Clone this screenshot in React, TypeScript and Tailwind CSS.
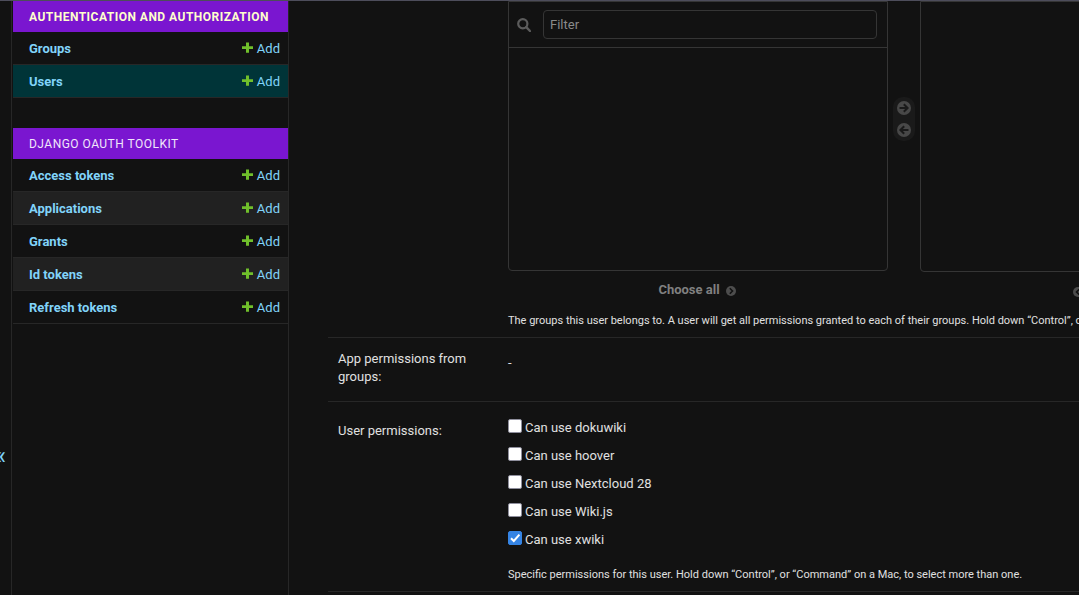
import { useState } from "react";

const LINK = "text-[#81d4fa] no-underline hover:underline";

function PlusIcon() {
  return (
    <svg viewBox="0 0 12 12" className="mb-0.5 h-3 w-3" aria-hidden="true">
      <path d="M4 0.5h3v3.7h4v2.8h-4v3.7h-3V7h-4V4.2h4z" fill="#70bf2b" />
    </svg>
  );
}

function ArrowIcon({ left = false }: { left?: boolean }) {
  return (
    <svg viewBox="0 0 14 14" className="h-3.5 w-3.5" aria-hidden="true">
      <circle cx="7" cy="7" r="7" fill="#484848" />
      <path
        d={left ? "M11.5 7H3.5M7.2 3.2L3.4 7l3.8 3.8" : "M2.5 7h8M6.8 3.2L10.6 7l-3.8 3.8"}
        fill="none"
        stroke="#1a1a1a"
        strokeWidth="2"
      />
    </svg>
  );
}

function ChevronIcon({ left = false }: { left?: boolean }) {
  return (
    <svg viewBox="0 0 10 10" className="mt-0.5 h-2.5 w-2.5" aria-hidden="true">
      <circle cx="5" cy="5" r="5" fill="#4d4d4d" />
      <path
        d={left ? "M6.2 2.3L3.5 5l2.7 2.7" : "M3.8 2.3L6.5 5 3.8 7.7"}
        fill="none"
        stroke="#121212"
        strokeWidth="1.6"
      />
    </svg>
  );
}

function SearchIcon() {
  return (
    <svg viewBox="0 0 14 14" className="h-3.5 w-3.5" aria-hidden="true">
      <circle cx="5.8" cy="5.8" r="4.6" fill="none" stroke="#5c5c5c" strokeWidth="2.2" />
      <path d="M9.2 9.2l3.8 3.8" stroke="#5c5c5c" strokeWidth="2.4" strokeLinecap="round" />
    </svg>
  );
}

type Model = { name: string; tone?: string };

function AppModule({ title, active, models }: { title: string; active?: boolean; models: Model[] }) {
  return (
    <table className="w-full border-separate border-spacing-0">
      <caption className="h-[31px] bg-[#7a16d0] px-4 text-left text-xs leading-8 tracking-[0.04em] uppercase">
        <a href="#" className={active ? "font-bold text-[#ffffcc]" : "text-[#f0e6fa]"}>
          {title}
        </a>
      </caption>
      <tbody>
        {models.map((m) => (
          <tr key={m.name} className={`h-[33px] ${m.tone ?? ""}`}>
            <th scope="row" className="border-b border-[#272727] pt-0.5 pl-4 text-left text-[13px] leading-4 font-bold">
              <a href="#" className={LINK}>{m.name}</a>
            </th>
            <td className="border-b border-[#272727] pt-0.5 pr-2 text-[13px] leading-4">
              <a href="#" className={`flex items-center justify-end gap-[3px] ${LINK}`}>
                <PlusIcon />
                Add
              </a>
            </td>
          </tr>
        ))}
      </tbody>
    </table>
  );
}

const AUTH: Model[] = [{ name: "Groups" }, { name: "Users", tone: "bg-[#003438]" }];
const OAUTH: Model[] = [
  { name: "Access tokens" },
  { name: "Applications", tone: "bg-[#212121]" },
  { name: "Grants" },
  { name: "Id tokens", tone: "bg-[#212121]" },
  { name: "Refresh tokens" },
];
const PERMISSIONS = ["Can use dokuwiki", "Can use hoover", "Can use Nextcloud 28", "Can use Wiki.js", "Can use xwiki"];

function Permission({ label }: { label: string }) {
  const [checked, setChecked] = useState(label === "Can use xwiki");
  return (
    <label className="flex h-7 items-start gap-[3px] text-[13px] leading-5">
      <span className="mt-0.5 grid">
        <input
          type="checkbox"
          checked={checked}
          onChange={(e) => setChecked(e.target.checked)}
          className="col-start-1 row-start-1 h-3.5 w-3.5 appearance-none rounded-xs border border-[#8f8f9d] bg-white checked:border-[#3584e4] checked:bg-[#3584e4]"
        />
        {checked && (
          <svg viewBox="0 0 14 14" className="pointer-events-none col-start-1 row-start-1 h-3.5 w-3.5" aria-hidden="true">
            <path d="M3 7.2l2.8 2.8L11.4 3.6" fill="none" stroke="#fff" strokeWidth="2" />
          </svg>
        )}
      </span>
      <span className="pt-px">{label}</span>
    </label>
  );
}

export default function App() {
  return (
    <div className="flex h-screen overflow-hidden border-t border-[#4d4d5b] bg-[#121212] font-['Roboto',sans-serif] text-[13px] text-[#e0e0e0]">
      <button
        type="button"
        aria-label="Toggle navigation"
        className="flex w-3 shrink-0 items-center justify-end overflow-hidden border-r border-[#272727] pt-79 pr-[5px] text-2xl leading-5 text-[#81d4fa]"
      >
        «
      </button>
      <nav className="ml-px flex w-69 shrink-0 flex-col gap-[30px] border-r border-[#272727]">
        <AppModule title="Authentication and Authorization" active models={AUTH} />
        <AppModule title="Django OAuth Toolkit" models={OAUTH} />
      </nav>

      <main className="ml-[39px] min-w-0 grow">
        <section className="border-b border-[#272727] pb-2 pl-[180px]">
          <div className="flex">
            <div className="w-95 shrink-0">
              <div className="h-[270px] rounded-b border border-[#353535]">
                <div className="flex h-[46px] items-center border-b border-[#353535] pr-2.5 pl-2">
                  <label htmlFor="filter" aria-label="Filter groups" className="w-[26px]">
                    <SearchIcon />
                  </label>
                  <input
                    id="filter"
                    type="text"
                    placeholder="Filter"
                    className="h-[29px] min-w-0 grow rounded border border-[#353535] bg-transparent px-1.5 text-[13px] placeholder:text-[#8a8a8a]"
                  />
                </div>
              </div>
              <button type="button" className="flex w-full items-center justify-center gap-1.5 pt-[11px] pr-0.5 leading-4 font-bold text-[#808080]">
                Choose all
                <ChevronIcon />
              </button>
            </div>
            <div className="mx-[5px] mt-24 flex h-11 w-[22px] shrink-0 flex-col items-center justify-between self-start rounded-[10px] bg-[#1a1a1a] py-1">
              <button type="button" aria-label="Choose"><ArrowIcon /></button>
              <button type="button" aria-label="Remove"><ArrowIcon left /></button>
            </div>
            <div className="w-95 shrink-0">
              <div className="h-[271px] rounded-b border border-[#353535]" />
              <button type="button" className="flex w-full items-center justify-center gap-1.5 pt-[11px] pl-1.5 leading-4 font-bold text-[#808080]">
                <ChevronIcon left />
                Remove all
              </button>
            </div>
          </div>
          <p className="pt-3.5 text-[11px] leading-4 whitespace-nowrap">
            The groups this user belongs to. A user will get all permissions granted to each of their groups. Hold down “Control”, or “Command” on a Mac, to select more than one.
          </p>
        </section>

        <section className="flex h-16 border-b border-[#272727] pt-3 pl-2.5">
          <div className="w-[170px] shrink-0 pr-8 leading-[18px]">App permissions from groups:</div>
          <div className="pt-1 leading-[18px]">-</div>
        </section>

        <fieldset className="flex border-b border-[#272727] pt-[15px] pb-2 pl-2.5">
          <div className="w-[170px] shrink-0 pt-[5px] leading-[18px]">User permissions:</div>
          <div>
            {PERMISSIONS.map((p) => (
              <Permission key={p} label={p} />
            ))}
            <p className="pt-2.5 text-[11px] leading-4 whitespace-nowrap">
              Specific permissions for this user. Hold down “Control”, or “Command” on a Mac, to select more than one.
            </p>
          </div>
        </fieldset>
      </main>
    </div>
  );
}
